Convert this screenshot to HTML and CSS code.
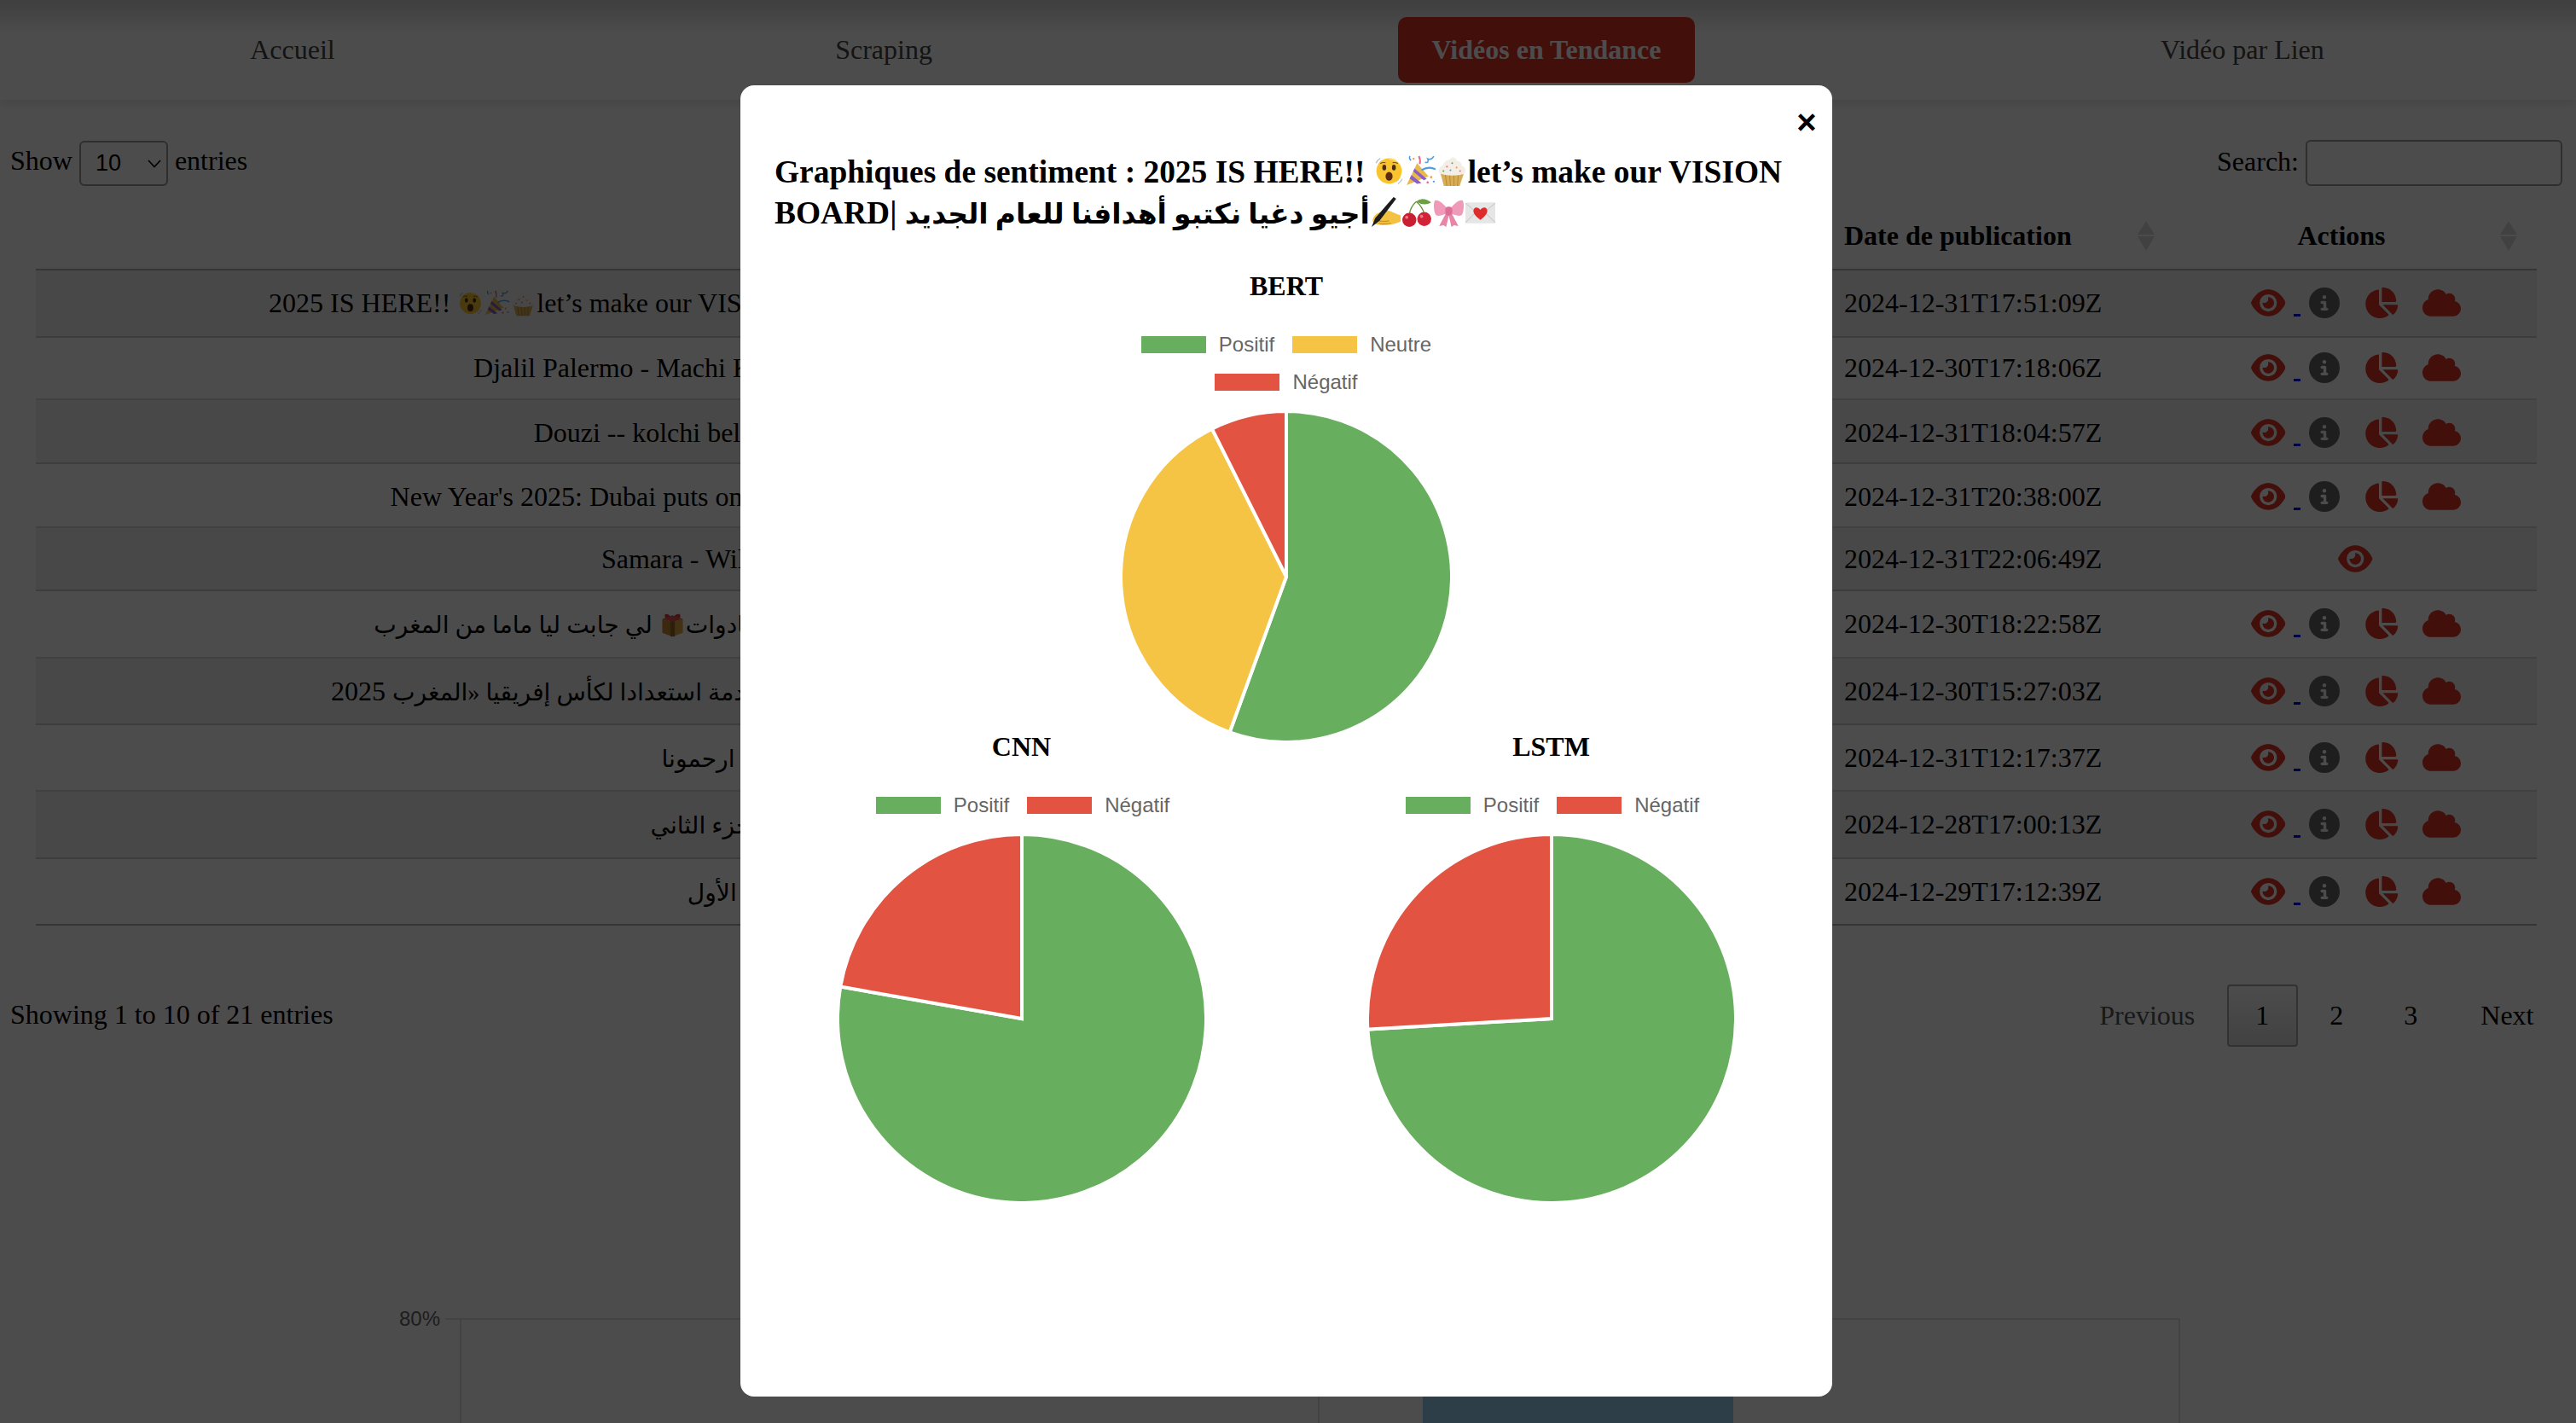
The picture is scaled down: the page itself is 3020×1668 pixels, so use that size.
FILE: index.html
```html
<!DOCTYPE html>
<html lang="fr">
<head>
    <meta charset="UTF-8">
    <title>Vidéos en Tendance</title>
    <link rel="stylesheet" href="styles.css">
</head>
<body>
    <!-- icones et emojis -->
    <svg class="defs" aria-hidden="true">
        <symbol id="i-eye" viewBox="0 0 576 512"><path d="M288 32c-80.800 0-145.500 36.800-192.600 80.600C48.600 156 17.300 208 2.500 243.700c-3.300 7.900-3.300 16.700 0 24.600C17.300 304 48.600 356 95.400 399.400C142.500 443.200 207.200 480 288 480s145.500-36.800 192.600-80.600c46.800-43.500 78.100-95.400 93-131.100c3.300-7.900 3.300-16.700 0-24.600c-14.900-35.700-46.200-87.700-93-131.100C433.500 68.800 368.800 32 288 32zM144 256a144 144 0 1 1 288 0 144 144 0 1 1 -288 0zm144-64c0 35.300-28.700 64-64 64c-7.100 0-13.900-1.200-20.300-3.300c-5.500-1.800-11.900 1.600-11.700 7.400c.3 6.900 1.300 13.800 3.200 20.700c13.700 51.200 66.400 81.600 117.600 67.900s81.600-66.400 67.900-117.600c-11.100-41.500-47.800-69.400-88.600-71.100c-5.800-.2-9.200 6.100-7.400 11.700c2.100 6.400 3.300 13.200 3.300 20.300z"/></symbol>
        <symbol id="i-info" viewBox="0 0 512 512"><path d="M256 512A256 256 0 1 0 256 0a256 256 0 1 0 0 512zM216 336h24V272H216c-13.300 0-24-10.700-24-24s10.700-24 24-24h48c13.300 0 24 10.700 24 24v88h8c13.300 0 24 10.700 24 24s-10.700 24-24 24H216c-13.300 0-24-10.700-24-24s10.700-24 24-24zm40-208a32 32 0 1 1 0 64 32 32 0 1 1 0-64z"/></symbol>
        <symbol id="i-pie" viewBox="0 0 576 512"><path d="M304 240V16.600c0-9 7-16.600 16-16.600C443.700 0 544 100.300 544 224c0 9-7.600 16-16.600 16H304zM32 272C32 150.700 122.100 50.300 239 34.300c9.200-1.300 17 6.100 17 15.400V288L412.500 444.500c6.700 6.700 6.200 17.700-1.500 23.100C371.800 495.600 323.800 512 272 512C139.500 512 32 404.600 32 272zm526.400 16c9.300 0 16.600 7.800 15.400 17c-7.700 55.900-34.600 105.600-73.900 142.300c-6 5.600-15.400 5.200-21.200-.7L320 288H558.400z"/></symbol>
        <symbol id="i-cloud" viewBox="0 0 640 512"><path d="M0 336c0 79.500 64.500 144 144 144H512c70.700 0 128-57.300 128-128c0-61.900-44-113.600-102.400-125.400c4.100-10.600 6.400-22.200 6.400-34.600c0-53-43-96-96-96c-19.700 0-38.100 6-53.300 16.200C367 64.200 315.300 32 256 32C167.600 32 96 103.600 96 192c0 2.700 .1 5.400 .2 8.100C40.200 219.800 0 273.200 0 336z"/></symbol>

        <symbol id="e-face" viewBox="0 0 36 36">
            <path d="M3 9A14 14 0 0 1 8 3.500M6 11A10 10 0 0 1 10 6M33 27A14 14 0 0 1 28 32.500M30 25A10 10 0 0 1 26 30" fill="none" stroke="#bdbdbd" stroke-width="1.200"/>
            <circle cx="18" cy="18" r="14.500" fill="#f8c531"/>
            <path d="M18 3.500A14.500 14.500 0 0 1 32.500 18C32 10 26 5 18 5Z" fill="#fde26b"/>
            <ellipse cx="12.500" cy="14" rx="2.200" ry="3.200" fill="#4a2c12"/>
            <ellipse cx="23.500" cy="14" rx="2.200" ry="3.200" fill="#4a2c12"/>
            <path d="M8 9.500Q10.500 7.500 14 8.500M28 9.500Q25.500 7.500 22 8.500" fill="none" stroke="#7a4b16" stroke-width="1"/>
            <ellipse cx="18" cy="24" rx="4" ry="5" fill="#5b2c10"/>
        </symbol>
        <symbol id="e-popper" viewBox="0 0 36 36">
            <path d="M2 34L14 9L27 24Z" fill="#e9b949"/>
            <path d="M7.500 22.500L19 31.500L14 32.500L5.500 26.500ZM11 15L25 27L21.500 28.500L9.500 18.500Z" fill="#8a5fc7"/>
            <path d="M17 10Q18 5 16 1" fill="none" stroke="#e86a8a" stroke-width="2"/>
            <path d="M19 17Q27 12 35 16" fill="none" stroke="#4d9de0" stroke-width="2"/>
            <path d="M7 6Q4 3 6 1M23 8Q28 9 26 4Q30 6 33 1" fill="none" stroke="#4d9de0" stroke-width="1.500"/>
            <circle cx="30" cy="25" r="1.300" fill="#e8a13a"/>
            <circle cx="26" cy="31" r="1.300" fill="#e86a8a"/>
            <circle cx="33" cy="30" r="1.100" fill="#4d9de0"/>
            <circle cx="10" cy="4" r="1.200" fill="#e8a13a"/>
        </symbol>
        <symbol id="e-cupcake" viewBox="0 0 36 36">
            <path d="M6 20L33 20L28 35L10 35Z" fill="#d9ad55" transform="translate(-1.500 0)"/>
            <path d="M10 21L12 35M15 21L16 35M20 21L20 35M25 21L24 35" stroke="#b98a38" stroke-width="1"/>
            <path d="M3 20C1 15 6 12 8 11C8 6 14 6 16 4C18 1 23 3 23 6C28 7 29 10 29 12C34 14 34 19 32 21C24 24 10 24 3 20Z" fill="#f4efe6"/>
            <circle cx="12" cy="13" r="1" fill="#e86a8a"/>
            <circle cx="18" cy="9" r="1" fill="#5aa469"/>
            <circle cx="23" cy="14" r="1" fill="#e8a13a"/>
            <circle cx="16" cy="17" r="1" fill="#4d9de0"/>
            <circle cx="27" cy="18" r="1" fill="#e86a8a"/>
            <circle cx="8" cy="18" r="1" fill="#5aa469"/>
        </symbol>
        <symbol id="e-hand" viewBox="0 0 36 36">
            <path d="M3 28C4 22 8 19 13 18L20 16C24 17 30 20 35 22L35 29C28 32 22 33 14 33C8 33 4 32 3 28Z" fill="#f4c242"/>
            <path d="M8 27Q14 30 22 28M10 31Q16 32 24 31" fill="none" stroke="#c98f1e" stroke-width="1"/>
            <path d="M27 1L30 3L11 28L2 35L6 25Z" fill="#1c1c1c"/>
        </symbol>
        <symbol id="e-cherry" viewBox="0 0 36 36">
            <path d="M17 6Q10 12 9 21M17 6Q24 12 26 20" fill="none" stroke="#6a8f3a" stroke-width="1.300"/>
            <path d="M17 6Q24 0 34 7Q26 12 17 6Z" fill="#6e9e45"/>
            <circle cx="9" cy="27" r="8" fill="#c81f32"/>
            <circle cx="26" cy="26" r="8" fill="#d12438"/>
            <circle cx="6" cy="24" r="1.800" fill="#ef7a85"/>
            <circle cx="23" cy="23" r="1.800" fill="#ef7a85"/>
        </symbol>
        <symbol id="e-bow" viewBox="0 0 36 36">
            <path d="M17 15C12 8 5 3 2 5C0 9 1 20 4 22C8 23 13 21 17 19Z" fill="#ef9ab8"/>
            <path d="M19 15C24 8 31 3 34 5C36 9 35 20 32 22C28 23 23 21 19 19Z" fill="#ef9ab8"/>
            <path d="M15 19L7 34L12 33L15 35L18 22L21 35L24 33L29 34L21 19Z" fill="#e985a8"/>
            <rect x="14" y="12" width="8" height="10" rx="3.500" fill="#dd6f97"/>
        </symbol>
        <symbol id="e-letter" viewBox="0 0 36 36">
            <rect x="1" y="7" width="34" height="24" rx="1.500" fill="#e6e6e6"/>
            <path d="M1 8L18 22L35 8M1 30L13 18M35 30L23 18" fill="none" stroke="#cacaca" stroke-width="1"/>
            <path d="M18 27C10 21 9 17 11 14C13 12 16 13 18 15.500C20 13 23 12 25 14C27 17 26 21 18 27Z" fill="#dd2c2c"/>
        </symbol>
        <symbol id="e-gift" viewBox="0 0 36 36">
            <path d="M4 11L18 15V35L4 30Z" fill="#c9862f"/>
            <path d="M32 11L18 15V35L32 30Z" fill="#dfa344"/>
            <path d="M15 14L21 14L21 35L15 35Z" fill="#8f6b22"/>
            <path d="M18 11C12 2 5 3 8 9C10 12 14 12 18 11C22 2 31 3 28 9C26 12 22 12 18 11Z" fill="#d63b3b"/>
            <path d="M4 11L18 6L32 11L18 15Z" fill="#e25050"/>
        </symbol>
    </svg>

    <nav class="topnav">
        <a class="nav-link" href="#">Accueil</a>
        <a class="nav-link" href="#">Scraping</a>
        <a class="nav-link active" href="#">Vidéos en Tendance</a>
        <a class="nav-link" href="#">Vidéo par Lien</a>
    </nav>

    <div class="table-controls">
        <label class="ctl-label">Show
            <span class="select-wrap">
                <select class="entries"><option>10</option></select>
                <svg class="chev" viewBox="0 0 16 10"><path d="M1 1L8 8.500L15 1" fill="none" stroke="#000" stroke-width="1.600"/></svg>
            </span>
            entries</label>
        <label class="ctl-label ctl-search">Search: <input class="search" type="search"></label>
    </div>

    <div class="table-wrap">
        <table class="videos">
            <colgroup>
                <col class="col-title"><col class="col-channel"><col class="col-date"><col class="col-actions">
            </colgroup>
            <thead>
                <tr>
                    <th><div class="th-in"><span class="th-label center">Titre</span><span class="sort"></span></div></th>
                    <th><div class="th-in"><span class="th-label center">Chaîne</span><span class="sort"></span></div></th>
                    <th><div class="th-in"><span class="th-label">Date de publication</span><span class="sort"></span></div></th>
                    <th><div class="th-in"><span class="th-label center nudge">Actions</span><span class="sort"></span></div></th>
                </tr>
            </thead>
            <tbody>
                <tr class="odd h79">
                    <td class="title">2025 IS HERE!! <svg class="emo"><use href="#e-face"/></svg><svg class="emo"><use href="#e-popper"/></svg><svg class="emo"><use href="#e-cupcake"/></svg>let’s make our VISION BOARD| <span class="ar">أجيو دغيا نكتبو أهدافنا للعام الجديد</span> <svg class="emo"><use href="#e-hand"/></svg><svg class="emo"><use href="#e-cherry"/></svg><svg class="emo"><use href="#e-bow"/></svg><svg class="emo"><use href="#e-letter"/></svg></td>
                    <td></td>
                    <td>2024-12-31T17:51:09Z</td>
                    <td class="actions"><a class="eye-link" href="#"><svg class="ic red w-eye"><use href="#i-eye"/></svg> </a><svg class="ic grey"><use href="#i-info"/></svg> <svg class="ic red w-pie"><use href="#i-pie"/></svg> <svg class="ic red w-cloud"><use href="#i-cloud"/></svg></td>
                </tr>
                <tr class="h73">
                    <td class="title">Djalil Palermo - Machi Kima Bekri (Clip Officiel) Prod 2024</td>
                    <td></td>
                    <td>2024-12-30T17:18:06Z</td>
                    <td class="actions"><a class="eye-link" href="#"><svg class="ic red w-eye"><use href="#i-eye"/></svg> </a><svg class="ic grey"><use href="#i-info"/></svg> <svg class="ic red w-pie"><use href="#i-pie"/></svg> <svg class="ic red w-cloud"><use href="#i-cloud"/></svg></td>
                </tr>
                <tr class="odd h75">
                    <td class="title">Douzi -- kolchi bel3ani (Official Music Video) 4K</td>
                    <td></td>
                    <td>2024-12-31T18:04:57Z</td>
                    <td class="actions"><a class="eye-link" href="#"><svg class="ic red w-eye"><use href="#i-eye"/></svg> </a><svg class="ic grey"><use href="#i-info"/></svg> <svg class="ic red w-pie"><use href="#i-pie"/></svg> <svg class="ic red w-cloud"><use href="#i-cloud"/></svg></td>
                </tr>
                <tr class="h75">
                    <td class="title">New Year's 2025: Dubai puts on stunning show of fireworks on Burj Khalifa</td>
                    <td></td>
                    <td>2024-12-31T20:38:00Z</td>
                    <td class="actions"><a class="eye-link" href="#"><svg class="ic red w-eye"><use href="#i-eye"/></svg> </a><svg class="ic grey"><use href="#i-info"/></svg> <svg class="ic red w-pie"><use href="#i-pie"/></svg> <svg class="ic red w-cloud"><use href="#i-cloud"/></svg></td>
                </tr>
                <tr class="odd h74">
                    <td class="title">Samara - Wili Wili (Official Clip) HD</td>
                    <td></td>
                    <td>2024-12-31T22:06:49Z</td>
                    <td class="actions"><a class="eye-plain" href="#"><svg class="ic red w-eye"><use href="#i-eye"/></svg></a></td>
                </tr>
                <tr class="h79">
                    <td class="title" lang="ar"><span class="ar">مرحبا بيكم فهاد الفيديو فتحت معاكم كاع الهدايا و لكادوات</span><svg class="emo"><use href="#e-gift"/></svg> <span class="ar">لي جابت ليا ماما من المغرب</span></td>
                    <td></td>
                    <td>2024-12-30T18:22:58Z</td>
                    <td class="actions"><a class="eye-link" href="#"><svg class="ic red w-eye"><use href="#i-eye"/></svg> </a><svg class="ic grey"><use href="#i-info"/></svg> <svg class="ic red w-pie"><use href="#i-pie"/></svg> <svg class="ic red w-cloud"><use href="#i-cloud"/></svg></td>
                </tr>
                <tr class="odd h78">
                    <td class="title" lang="ar"><span class="ar">المغرب يبني ملاعب جديدة و مرافق رياضية عالمية متقدمة استعدادا لكأس إفريقيا «المغرب</span> 2025»</td>
                    <td></td>
                    <td>2024-12-30T15:27:03Z</td>
                    <td class="actions"><a class="eye-link" href="#"><svg class="ic red w-eye"><use href="#i-eye"/></svg> </a><svg class="ic grey"><use href="#i-info"/></svg> <svg class="ic red w-pie"><use href="#i-pie"/></svg> <svg class="ic red w-cloud"><use href="#i-cloud"/></svg></td>
                </tr>
                <tr class="h78">
                    <td class="title" lang="ar"><span class="ar">الحلقة الجديدة كاملة - ارحمونا</span></td>
                    <td></td>
                    <td>2024-12-31T12:17:37Z</td>
                    <td class="actions"><a class="eye-link" href="#"><svg class="ic red w-eye"><use href="#i-eye"/></svg> </a><svg class="ic grey"><use href="#i-info"/></svg> <svg class="ic red w-pie"><use href="#i-pie"/></svg> <svg class="ic red w-cloud"><use href="#i-cloud"/></svg></td>
                </tr>
                <tr class="odd h79">
                    <td class="title" lang="ar"><span class="ar">الحلقة الأخيرة منها - الجزء الثاني</span></td>
                    <td></td>
                    <td>2024-12-28T17:00:13Z</td>
                    <td class="actions"><a class="eye-link" href="#"><svg class="ic red w-eye"><use href="#i-eye"/></svg> </a><svg class="ic grey"><use href="#i-info"/></svg> <svg class="ic red w-pie"><use href="#i-pie"/></svg> <svg class="ic red w-cloud"><use href="#i-cloud"/></svg></td>
                </tr>
                <tr class="last h78">
                    <td class="title" lang="ar"><span class="ar">حلقة جديدة - الجزء الأول</span></td>
                    <td></td>
                    <td>2024-12-29T17:12:39Z</td>
                    <td class="actions"><a class="eye-link" href="#"><svg class="ic red w-eye"><use href="#i-eye"/></svg> </a><svg class="ic grey"><use href="#i-info"/></svg> <svg class="ic red w-pie"><use href="#i-pie"/></svg> <svg class="ic red w-cloud"><use href="#i-cloud"/></svg></td>
                </tr>
            </tbody>
        </table>
    </div>

    <div class="table-footer">
        <div class="info">Showing 1 to 10 of 21 entries</div>
        <div class="pager">
            <a class="page disabled">Previous</a>
            <a class="page current">1</a>
            <a class="page">2</a>
            <a class="page">3</a>
            <a class="page">Next</a>
        </div>
    </div>

    <svg class="bar-chart" viewBox="0 0 3020 168">
        <text class="axis-label" x="516" y="54">80%</text>
        <path d="M522 46H2555M540 46V168M1546 46V168M2555 46V168" fill="none" stroke="#000" stroke-opacity=".12" stroke-width="2"/>
        <rect x="1668" y="100" width="364" height="68" fill="#36a2eb" fill-opacity=".5"/>
    </svg>

    <div class="overlay">
        <div class="modal">
            <button class="close-btn" type="button">×</button>
            <h2 class="modal-title">Graphiques de sentiment : 2025 IS HERE!! <svg class="emo big"><use href="#e-face"/></svg><svg class="emo big"><use href="#e-popper"/></svg><svg class="emo big"><use href="#e-cupcake"/></svg>let’s make our VISION BOARD| <span class="ar">أجيو دغيا نكتبو أهدافنا للعام الجديد</span><svg class="emo big"><use href="#e-hand"/></svg><svg class="emo big"><use href="#e-cherry"/></svg><svg class="emo big"><use href="#e-bow"/></svg><svg class="emo big"><use href="#e-letter"/></svg></h2>

            <div class="chart bert">
                <h4 class="chart-title">BERT</h4>
                <div class="legend"><span class="lg"><i class="box green"></i>Positif</span><span class="lg"><i class="box yellow"></i>Neutre</span></div>
                <div class="legend"><span class="lg"><i class="box redb"></i>Négatif</span></div>
                <svg class="pie small" viewBox="-192 -192 384 384">
                    <path class="s-green" d="M0 0L0 -194A194 194 0 1 1 -66.350 182.300Z"/>
                    <path class="s-yellow" d="M0 0L-66.350 182.300A194 194 0 0 1 -87.070 -173.360Z"/>
                    <path class="s-red" d="M0 0L-87.070 -173.360A194 194 0 0 1 0 -194Z"/>
                </svg>
            </div>

            <div class="chart-row">
                <div class="chart">
                    <h4 class="chart-title">CNN</h4>
                    <div class="legend"><span class="lg"><i class="box green"></i>Positif</span><span class="lg"><i class="box redb"></i>Négatif</span></div>
                    <svg class="pie large" viewBox="-214 -214 428 428">
                        <path class="s-green" d="M0 0L0 -216A216 216 0 1 1 -212.720 -37.510Z"/>
                        <path class="s-red" d="M0 0L-212.720 -37.510A216 216 0 0 1 0 -216Z"/>
                    </svg>
                </div>
                <div class="chart">
                    <h4 class="chart-title">LSTM</h4>
                    <div class="legend"><span class="lg"><i class="box green"></i>Positif</span><span class="lg"><i class="box redb"></i>Négatif</span></div>
                    <svg class="pie large" viewBox="-214 -214 428 428">
                        <path class="s-green" d="M0 0L0 -216A216 216 0 1 1 -215.630 12.550Z"/>
                        <path class="s-red" d="M0 0L-215.630 12.550A216 216 0 0 1 0 -216Z"/>
                    </svg>
                </div>
            </div>
        </div>
    </div>
</body>
</html>
```

FILE: styles.css
```css
html, body {
    height: 100%;
}
body {
    margin: 0;
    background-color: #fff;
    color: #000;
    font-family: "Liberation Serif", "DejaVu Sans", serif;
    font-size: 32px;
    overflow: hidden;
}
.defs {
    position: absolute;
    width: 0;
    height: 0;
}
.ar {
    font-size: 0.88em;
}

/* navigation */
.topnav {
    display: flex;
    justify-content: space-around;
    padding: 20px 2px 20px 0;
    background: linear-gradient(#d2d2d2, #fff 40px);
    box-shadow: 0 4px 12px rgba(0, 0, 0, 0.1);
}
.nav-link {
    padding: 20px 40px;
    color: #444;
    text-decoration: none;
    border-radius: 10px;
}
.nav-link.active {
    padding: 20px 39px;
    background-color: #dd3322;
    color: #fff;
    font-weight: bold;
}

/* controles du tableau */
.table-controls {
    display: flex;
    justify-content: space-between;
    align-items: center;
    margin-top: 47px;
    padding: 0 16px 0 12px;
    height: 54px;
}
.ctl-search {
    align-self: flex-start;
}
.select-wrap {
    position: relative;
    display: inline-block;
    vertical-align: middle;
}
.entries {
    display: block;
    appearance: none;
    width: 104px;
    height: 53px;
    box-sizing: border-box;
    padding: 0 0 0 17px;
    border: 2px solid #999;
    border-radius: 6px;
    background: #fff;
    font-family: "Liberation Sans", sans-serif;
    font-size: 27px;
}
.chev {
    position: absolute;
    right: 8px;
    top: 22px;
    width: 16px;
    height: 10px;
}
.search {
    box-sizing: border-box;
    width: 301px;
    height: 54px;
    margin-bottom: 4px;
    border: 2px solid #999;
    border-radius: 6px;
    background: #fff;
    vertical-align: middle;
}

/* tableau */
.table-wrap {
    margin: 20px 46px 0 42px;
}
.videos {
    width: 100%;
    table-layout: fixed;
    border-collapse: separate;
    border-spacing: 0;
}
.col-title { width: 1812px; }
.col-channel { width: 288px; }
.col-date { width: 407px; }
.col-actions { width: 425px; }

.videos th {
    box-sizing: border-box;
    height: 79px;
    padding: 0 23px 0 20px;
    border-bottom: 2px solid rgba(0, 0, 0, 0.3);
    text-align: left;
}
.th-in {
    display: flex;
    align-items: center;
}
.th-label {
    flex: 1;
}
.th-label.center {
    text-align: center;
}
.th-label.nudge {
    padding-right: 10px;
}
.sort {
    display: flex;
    flex-direction: column;
    gap: 2px;
    width: 20px;
}
.sort::before, .sort::after {
    content: "";
    width: 0;
    height: 0;
    border-left: 10px solid transparent;
    border-right: 10px solid transparent;
}
.sort::before {
    border-bottom: 16px solid rgba(0, 0, 0, 0.14);
}
.sort::after {
    border-top: 17px solid rgba(0, 0, 0, 0.14);
}

.videos td {
    box-sizing: border-box;
    padding: 0 20px;
    border-bottom: 2px solid rgba(0, 0, 0, 0.15);
    white-space: nowrap;
    overflow: hidden;
}
.videos .last td {
    border-bottom-color: rgba(0, 0, 0, 0.3);
}
.videos .odd td {
    background-color: rgba(0, 0, 0, 0.05);
}
.h73 td { height: 73px; }
.h74 td { height: 74px; }
.videos .h75 td { height: 75px; padding-top: 4px; }
.h78 td { height: 78px; }
.h79 td { height: 79px; }

.videos td.title, .videos td.actions {
    text-align: center;
}
.emo {
    width: 31px;
    height: 31px;
    vertical-align: -5px;
}
.emo.big {
    width: 37px;
    height: 37px;
    vertical-align: -5px;
}
.ic {
    width: 36px;
    height: 36px;
    margin: 0 10px;
    fill: currentColor;
    vertical-align: -7px;
}
.w-eye, .w-pie { width: 40.500px; }
.w-cloud { width: 45px; }
.red { color: #dd3322; }
.grey { color: #666; }
.eye-link {
    color: #0000ee;
    text-decoration: underline;
    text-decoration-thickness: 3px;
}
.eye-plain {
    color: #dd3322;
}

/* pied du tableau */
.table-footer {
    display: flex;
    justify-content: space-between;
    align-items: center;
    margin-top: 69px;
    padding: 0 16px 0 12px;
}
.info {
    margin-bottom: 3px;
}
.pager {
    display: flex;
    gap: 4px;
}
.page {
    box-sizing: border-box;
    height: 73px;
    padding: 16px 31.500px;
    border: 2px solid transparent;
    border-radius: 4px;
}
.page:last-child {
    margin-left: 3px;
}
.page.disabled {
    color: #555;
}
.page.current {
    border-color: #a8a8a8;
    background: linear-gradient(#fff, #dcdcdc);
}

.bar-chart {
    display: block;
    margin-top: 273px;
    width: 3020px;
    height: 168px;
}
.axis-label {
    fill: #666;
    font-family: "Liberation Sans", sans-serif;
    font-size: 24px;
    text-anchor: end;
}

/* fenetre modale */
.overlay {
    position: absolute;
    inset: 0;
    background-color: rgba(0, 0, 0, 0.7);
}
.modal {
    position: relative;
    box-sizing: border-box;
    width: 1280px;
    height: 1537px;
    margin: 100px 0 0 868px;
    padding: 78px 40px 0;
    background-color: #fff;
    border-radius: 16px;
}
.close-btn {
    position: absolute;
    top: 18px;
    right: 10px;
    width: 40px;
    height: 50px;
    padding: 0;
    border: none;
    background: none;
    color: #000;
    font-family: "Liberation Sans", sans-serif;
    font-size: 40px;
    font-weight: bold;
    line-height: 50px;
}
.modal-title {
    margin: 0 0 53px;
    font-size: 37.440px;
    line-height: 48px;
}
.chart {
    display: flex;
    flex-direction: column;
    align-items: center;
}
.chart-title {
    margin: -2px 0 38px;
    font-size: 32px;
    line-height: 18px;
}
.legend {
    display: flex;
    align-items: center;
    justify-content: center;
    gap: 21px;
    height: 44px;
    color: #666;
    font-family: "Liberation Sans", sans-serif;
    font-size: 24px;
}
.chart-row .legend {
    margin-left: 3px;
}
.lg {
    display: flex;
    align-items: center;
    gap: 15px;
}
.box {
    width: 76px;
    height: 20px;
}
.green { background-color: #68ae5f; }
.yellow { background-color: #f6c445; }
.redb { background-color: #e25341; }

.pie {
    display: block;
    margin-top: 14px;
}
.pie.small { width: 384px; height: 384px; }
.pie.large { width: 428px; height: 428px; }
.pie path {
    stroke: #fff;
    stroke-width: 4;
}
.s-green { fill: #68ae5f; }
.s-yellow { fill: #f6c445; }
.s-red { fill: #e25341; }

.chart-row {
    display: grid;
    grid-template-columns: 1fr 1fr;
    margin: 0 -21px;
}
```
